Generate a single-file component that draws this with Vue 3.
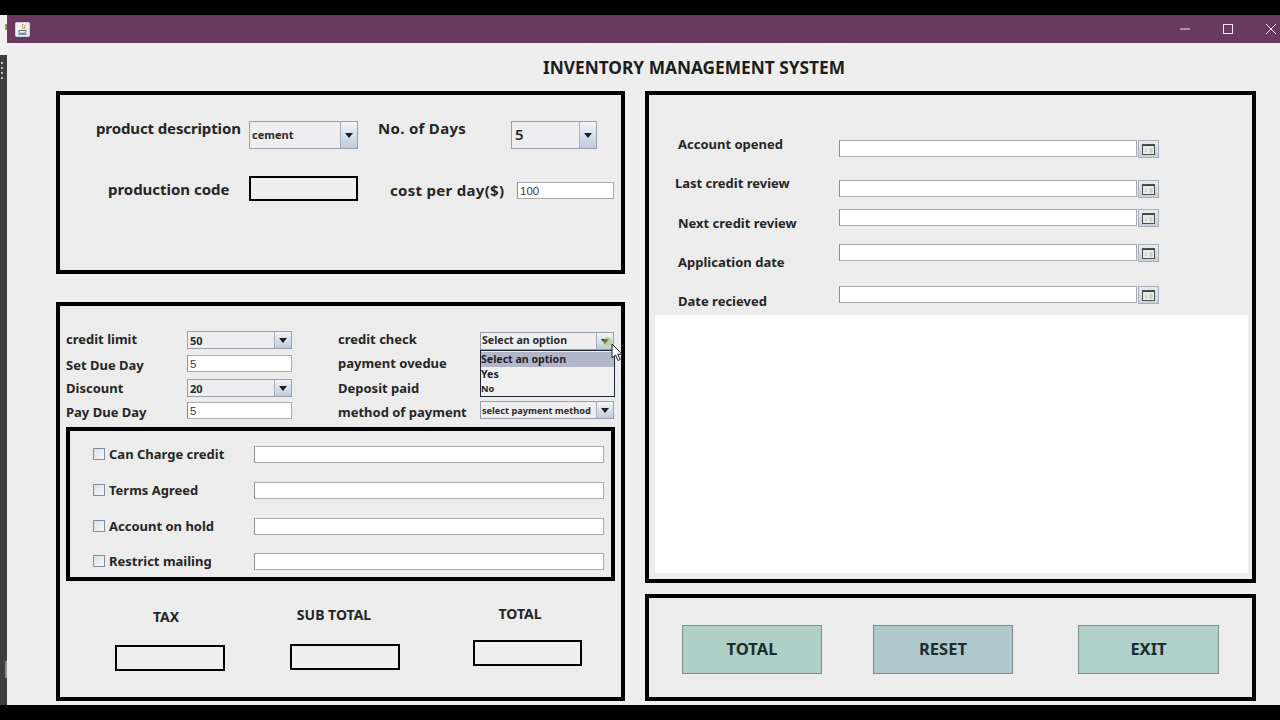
<script setup>
const checks = [
  { label: 'Can Charge credit', cls: 'first' },
  { label: 'Terms Agreed', cls: 'wide' },
  { label: 'Account on hold', cls: 'wide' },
  { label: 'Restrict mailing', cls: 'narrow' },
]
const dateLabels = [
  { text: 'Account opened', cls: 'd1' },
  { text: 'Last credit review', cls: 'd2' },
  { text: 'Next credit review', cls: 'd3' },
  { text: 'Application date', cls: 'd4' },
  { text: 'Date recieved', cls: 'd5' },
]
const dateFields = ['f1', 'f2', 'f3', 'f4', 'f5']
</script>

<template>
  <div class="screen">
    <div class="topbar"></div>
    <div class="desk">
      <div class="edge">
        <div class="edge-top"><i class="edge-mark"></i></div>
        <div class="edge-dots"><i></i><i></i><i></i><i></i></div>
        <div class="edge-tick"></div>
      </div>
      <div class="window">
        <header class="titlebar">
          <svg class="java" width="15" height="15" viewBox="0 0 15 15">
            <rect x="0.5" y="0.5" width="14" height="14" rx="1" fill="#eef0f4" stroke="#c9ccd6" />
            <path d="M8 2C6 4 9 5 7.5 7M10 3C9 5 10.5 5.5 9.5 7" fill="none" stroke="#d9822b" stroke-width="1" />
            <path d="M4 8.5h7v1.2c0 1-1 1.6-2 1.6H6c-1 0-2-.6-2-1.6zM3 12.2h9" fill="none" stroke="#4a6d94" stroke-width="1" />
          </svg>
          <div class="controls">
            <svg width="10" height="2" viewBox="0 0 10 2"><path d="M0 1h10" stroke="#f2e6ef" stroke-width="1" /></svg>
            <svg width="10" height="10" viewBox="0 0 10 10"><rect x="0.5" y="0.5" width="9" height="9" fill="none" stroke="#f2e6ef" /></svg>
            <svg width="10" height="10" viewBox="0 0 10 10"><path d="M0 0l10 10M10 0L0 10" stroke="#f2e6ef" stroke-width="1" /></svg>
          </div>
        </header>

        <main class="content">
          <h1 class="heading">INVENTORY MANAGEMENT SYSTEM</h1>
          <div class="columns">
            <div class="col">
              <section class="panel product">
                <div class="prow prow1">
                  <span class="lbl big pl1">product description</span>
                  <div class="combo c109 tall">
                    <span class="combo-val">cement</span>
                    <span class="combo-btn"><i class="arrow"></i></span>
                  </div>
                  <span class="lbl big pl2">No. of Days</span>
                  <div class="combo c86 tall">
                    <span class="combo-val large">5</span>
                    <span class="combo-btn"><i class="arrow"></i></span>
                  </div>
                </div>
                <div class="prow prow2">
                  <span class="lbl big pl3">production code</span>
                  <div class="outbox c109"></div>
                  <span class="lbl big pl4">cost per day($)</span>
                  <div class="input c97 mt6">100</div>
                </div>
              </section>

              <section class="panel credit">
                <div class="form">
                  <div class="fcol labels1">
                    <span class="lbl">credit limit</span>
                    <span class="lbl g10">Set Due Day</span>
                    <span class="lbl g7">Discount</span>
                    <span class="lbl g8">Pay Due Day</span>
                  </div>
                  <div class="fcol ctrls1">
                    <div class="combo c105 small">
                      <span class="combo-val">50</span>
                      <span class="combo-btn"><i class="arrow"></i></span>
                    </div>
                    <div class="input c105 mt6">5</div>
                    <div class="combo c105 small mt7">
                      <span class="combo-val">20</span>
                      <span class="combo-btn"><i class="arrow"></i></span>
                    </div>
                    <div class="input c105 mt5">5</div>
                  </div>
                  <div class="fcol labels2">
                    <span class="lbl">credit check</span>
                    <span class="lbl g8">payment ovedue</span>
                    <span class="lbl g9">Deposit paid</span>
                    <span class="lbl g8">method of payment</span>
                  </div>
                  <div class="fcol ctrls2">
                    <div class="combo c134 small">
                      <span class="combo-val opt">Select an option</span>
                      <span class="combo-btn"><i class="arrow"></i></span>
                      <ul class="menu">
                        <li class="on">Select an option</li>
                        <li>Yes</li>
                        <li class="tiny">No</li>
                      </ul>
                      <i class="halo"></i>
                      <svg class="cursor" width="13" height="19" viewBox="0 0 13 19">
                        <path d="M1 1v14l3.5-3 2.5 5.5 2.2-1-2.5-5.3H11z" fill="#fff" stroke="#222" stroke-width="1" />
                      </svg>
                    </div>
                    <div class="combo c134 small method">
                      <span class="combo-val tiny">select payment method</span>
                      <span class="combo-btn"><i class="arrow"></i></span>
                    </div>
                  </div>
                </div>

                <div class="checks">
                  <div v-for="c in checks" :key="c.label" class="check-row" :class="c.cls">
                    <span class="box"></span>
                    <span class="lbl check-lbl">{{ c.label }}</span>
                    <div class="input c350"></div>
                  </div>
                </div>

                <div class="totals">
                  <div class="tcol t1">
                    <span class="lbl tlabel">TAX</span>
                    <div class="outbox"></div>
                  </div>
                  <div class="tcol t2">
                    <span class="lbl tlabel">SUB TOTAL</span>
                    <div class="outbox"></div>
                  </div>
                  <div class="tcol t3">
                    <span class="lbl tlabel">TOTAL</span>
                    <div class="outbox"></div>
                  </div>
                </div>
              </section>
            </div>

            <div class="col right">
              <section class="panel dates">
                <div class="dform">
                  <div class="dlabels">
                    <span v-for="d in dateLabels" :key="d.text" class="lbl" :class="d.cls">{{ d.text }}</span>
                  </div>
                  <div class="dfields">
                    <div v-for="f in dateFields" :key="f" class="dfield" :class="f">
                      <div class="input c298"></div>
                      <div class="calbtn">
                        <svg width="13" height="11" viewBox="0 0 13 11">
                          <rect x="0.5" y="0.5" width="12" height="10" fill="#e8eae4" stroke="#4a504c" />
                          <path d="M1 1.5h11" stroke="#3c4440" stroke-width="1" />
                          <path d="M4 5v3M8 5h2v3H8z" stroke="#c4bcc4" fill="none" stroke-width="1" />
                        </svg>
                      </div>
                    </div>
                  </div>
                </div>
                <div class="white"></div>
              </section>

              <section class="panel actions">
                <button class="action a-total">TOTAL</button>
                <button class="action a-reset">RESET</button>
                <button class="action a-exit">EXIT</button>
              </section>
            </div>
          </div>
        </main>
      </div>
    </div>
    <div class="bottombar"></div>
  </div>
</template>

<style scoped>
* { box-sizing: border-box; }
.screen {
  width: 1280px; height: 720px; background: #000; overflow: hidden;
  display: flex; flex-direction: column;
  font-family: "DejaVu Sans", sans-serif; color: #222;
}
.topbar { height: 15px; flex: none; }
.bottombar { height: 15px; flex: none; }
.desk { height: 690px; flex: none; display: flex; }
.edge { width: 7px; background: #3c3d3d; flex: none; }
.edge-top { height: 40px; background: #f1f1f1; padding-top: 9px; display: flex; justify-content: flex-end; }
.edge-mark { width: 2px; height: 6px; background: #a08a50; display: block; }
.edge-dots { display: flex; flex-direction: column; gap: 3px; margin-top: 7px; padding-left: 1px; }
.edge-dots i { width: 2px; height: 2px; background: #bbb; display: block; }
.edge-tick { width: 2px; height: 17px; background: #8a8c90; margin: 582px 0 0 5px; }
.window { flex: 1; display: flex; flex-direction: column; min-width: 0; }
.titlebar {
  height: 28px; background: #673a5e; flex: none;
  display: flex; align-items: center; justify-content: space-between; padding-left: 8px;
}
.controls { display: flex; align-items: center; gap: 33px; padding-right: 4px; }
.content { flex: 1; background: #eeeeee; padding-top: 15px; }
.heading {
  margin: 0; height: 20px; line-height: 20px; text-align: center;
  font-size: 17.3px; font-weight: 700; color: #1d1d1d;
  padding-left: 101px; white-space: nowrap;
  font-family: "Noto Sans", sans-serif;
}
.columns { display: grid; grid-template-columns: 569px 611px; column-gap: 20px; margin-top: 13px; padding-left: 49px; }
.col { display: flex; flex-direction: column; gap: 28px; }
.col.right { gap: 11px; }
.panel { border: 4px solid #000; background: #ececec; }

.lbl {
  display: block; height: 16px; line-height: 16px; font-size: 13px; font-weight: 700; white-space: nowrap; color: #262626;
  font-family: "Noto Sans", sans-serif;
}
.big { font-size: 15px; letter-spacing: 0.3px; }

.product { height: 183px; }
.prow { display: flex; align-items: flex-start; }
.prow1 { margin-top: 26px; height: 28px; }
.prow2 { margin-top: 27px; height: 25px; }
.pl1 { margin-left: 36px; width: 153px; height: 14px; line-height: 14px; letter-spacing: -0.12px; }
.pl2 { margin-left: 20px; width: 133px; height: 14px; line-height: 14px; }
.pl3 { margin-left: 48px; width: 141px; height: 27px; line-height: 27px; letter-spacing: -0.03px; }
.pl4 { margin-left: 32px; width: 127px; height: 28px; line-height: 28px; }

.c86 { width: 86px; } .c97 { width: 97px; } .c105 { width: 105px; }
.c109 { width: 109px; } .c134 { width: 134px; } .c350 { width: 350px; } .c298 { width: 298px; }
.mt5 { margin-top: 5px; } .mt6 { margin-top: 6px; } .mt7 { margin-top: 7px; }

.combo {
  display: flex; position: relative; border: 1px solid #98a0ac; background: #eeeef0;
  height: 18px; flex: none;
}
.combo.tall { height: 28px; }
.combo-val {
  flex: 1; display: flex; align-items: center; padding-left: 2px;
  font-size: 11px; font-weight: 700; color: #2a2a2a; white-space: nowrap; overflow: hidden;
  font-family: "Noto Sans", sans-serif; min-width: 0;
}
.tall .combo-val { padding-bottom: 2px; }
.combo-val.large { font-size: 15px; padding-left: 3px; font-weight: 600; }
.combo-val.opt { font-size: 10.6px; padding-left: 1px; padding-bottom: 3px; }
.combo-val.tiny { font-size: 9.2px; padding-left: 1px; }
.combo-btn {
  width: 17px; flex: none; border-left: 1px solid #a5aebb;
  background: linear-gradient(#f4f6f9, #bccbdc);
  display: flex; align-items: center; justify-content: center;
}
.arrow { width: 0; height: 0; border-left: 4.5px solid transparent; border-right: 4.5px solid transparent; border-top: 5px solid #1b1f24; display: block; }

.input {
  height: 17px; flex: none; background: #fff;
  border: 1px solid #a8abaf; border-left-color: #8b8e93;
  font-family: "Liberation Sans", sans-serif; font-size: 11.5px; line-height: 17px; padding-left: 2px; color: #3c3c3c;
}
.outbox { width: 110px; height: 26px; border: 2px solid #000; background: #eee; flex: none; }
.prow2 .outbox { height: 25px; width: 109px; }

.credit { height: 399px; }
.form { display: flex; height: 121px; padding-left: 6px; }
.fcol { display: flex; flex-direction: column; align-items: flex-start; flex: none; }
.labels1 { width: 121px; padding-top: 25px; }
.ctrls1 { width: 105px; padding-top: 25px; }
.labels2 { width: 142px; padding-top: 25px; margin-left: 46px; }
.ctrls2 { width: 134px; padding-top: 26px; }
.g7 { margin-top: 7px; } .g8 { margin-top: 8px; } .g9 { margin-top: 9px; } .g10 { margin-top: 10px; }
.method { margin-top: 51px; }

.menu {
  position: absolute; left: -1px; top: 17px; width: 135px; height: 47px; margin: 0; padding: 1px 0 0;
  list-style: none; background: #f0f0f0; border: 1px solid #1d2733; z-index: 2;
}
.menu li {
  height: 15px; line-height: 14px; padding-left: 0; font-size: 10.6px; font-weight: 700;
  font-family: "Noto Sans", sans-serif; color: #20242a;
}
.menu li.on { background: #b3b6c8; }
.menu li.tiny { font-size: 9.2px; }
.halo { position: absolute; left: 122px; top: 4px; width: 9px; height: 9px; border-radius: 50%; background: rgba(180, 200, 90, 0.55); z-index: 1; }
.cursor { position: absolute; left: 130px; top: 10px; z-index: 3; }

.checks { margin-left: 6px; width: 549px; height: 154px; border: 4px solid #000; padding-top: 15px; }
.check-row { display: flex; align-items: center; height: 17px; padding-left: 23px; }
.check-row.wide { margin-top: 19px; }
.check-row.narrow { margin-top: 18px; }
.box { width: 12px; height: 12px; flex: none; margin-bottom: 2px; border: 1px solid #7f8ea3; background: linear-gradient(135deg, #d8dde6, #f6f7f9); }
.check-lbl { width: 145px; margin: 0 0 2px 4px; }

.totals { display: flex; padding-left: 55px; }
.tcol { width: 110px; flex: none; display: flex; flex-direction: column; }
.tlabel { text-align: center; font-size: 14px; }
.t1 .tlabel { margin-top: 28px; padding-right: 8px; }
.t1 .outbox { margin-top: 20px; }
.t2 { margin-left: 65px; }
.t2 .tlabel { margin-top: 26px; padding-right: 22px; }
.t2 .outbox { margin-top: 21px; }
.t3 { margin-left: 73px; width: 109px; }
.t3 .tlabel { margin-top: 25px; padding-right: 15px; }
.t3 .outbox { margin-top: 18px; width: 109px; }

.dates { height: 492px; display: flex; flex-direction: column; padding: 0 4px 6px 6px; }
.dform { height: 220px; display: flex; flex: none; margin-left: -6px; }
.dlabels { width: 190px; padding: 41px 0 0 29px; display: flex; flex-direction: column; }
.d2 { margin-top: 23px; margin-left: -3px; }
.d3 { margin-top: 24px; }
.d4, .d5 { margin-top: 23px; }
.dfields { display: flex; flex-direction: column; padding-top: 45px; }
.dfield { display: flex; gap: 1px; height: 18px; }
.f2 { margin-top: 22px; } .f3 { margin-top: 11px; } .f4 { margin-top: 17px; } .f5 { margin-top: 24px; }
.calbtn {
  width: 21px; height: 18px; border: 1px solid #a9afba;
  background: linear-gradient(#e9ebf0, #c9cfd9);
  display: flex; align-items: center; justify-content: center;
}
.white { flex: 1; background: #fff; }

.actions { height: 107px; display: flex; align-items: flex-start; padding: 27px 0 0 33px; }
.action {
  width: 140px; height: 49px; flex: none; border: 1px solid #7f8c88; padding: 0 0 2px;
  font-family: "Noto Sans", sans-serif; font-size: 16.5px; font-weight: 700; color: #1f2d30;
}
.a-total { background: #aed0c6; }
.a-reset { background: #aec8cb; margin-left: 51px; }
.a-exit { background: #afd1c9; margin-left: 65px; width: 141px; }
</style>

<style>
html, body { margin: 0; background: #000; }
</style>
